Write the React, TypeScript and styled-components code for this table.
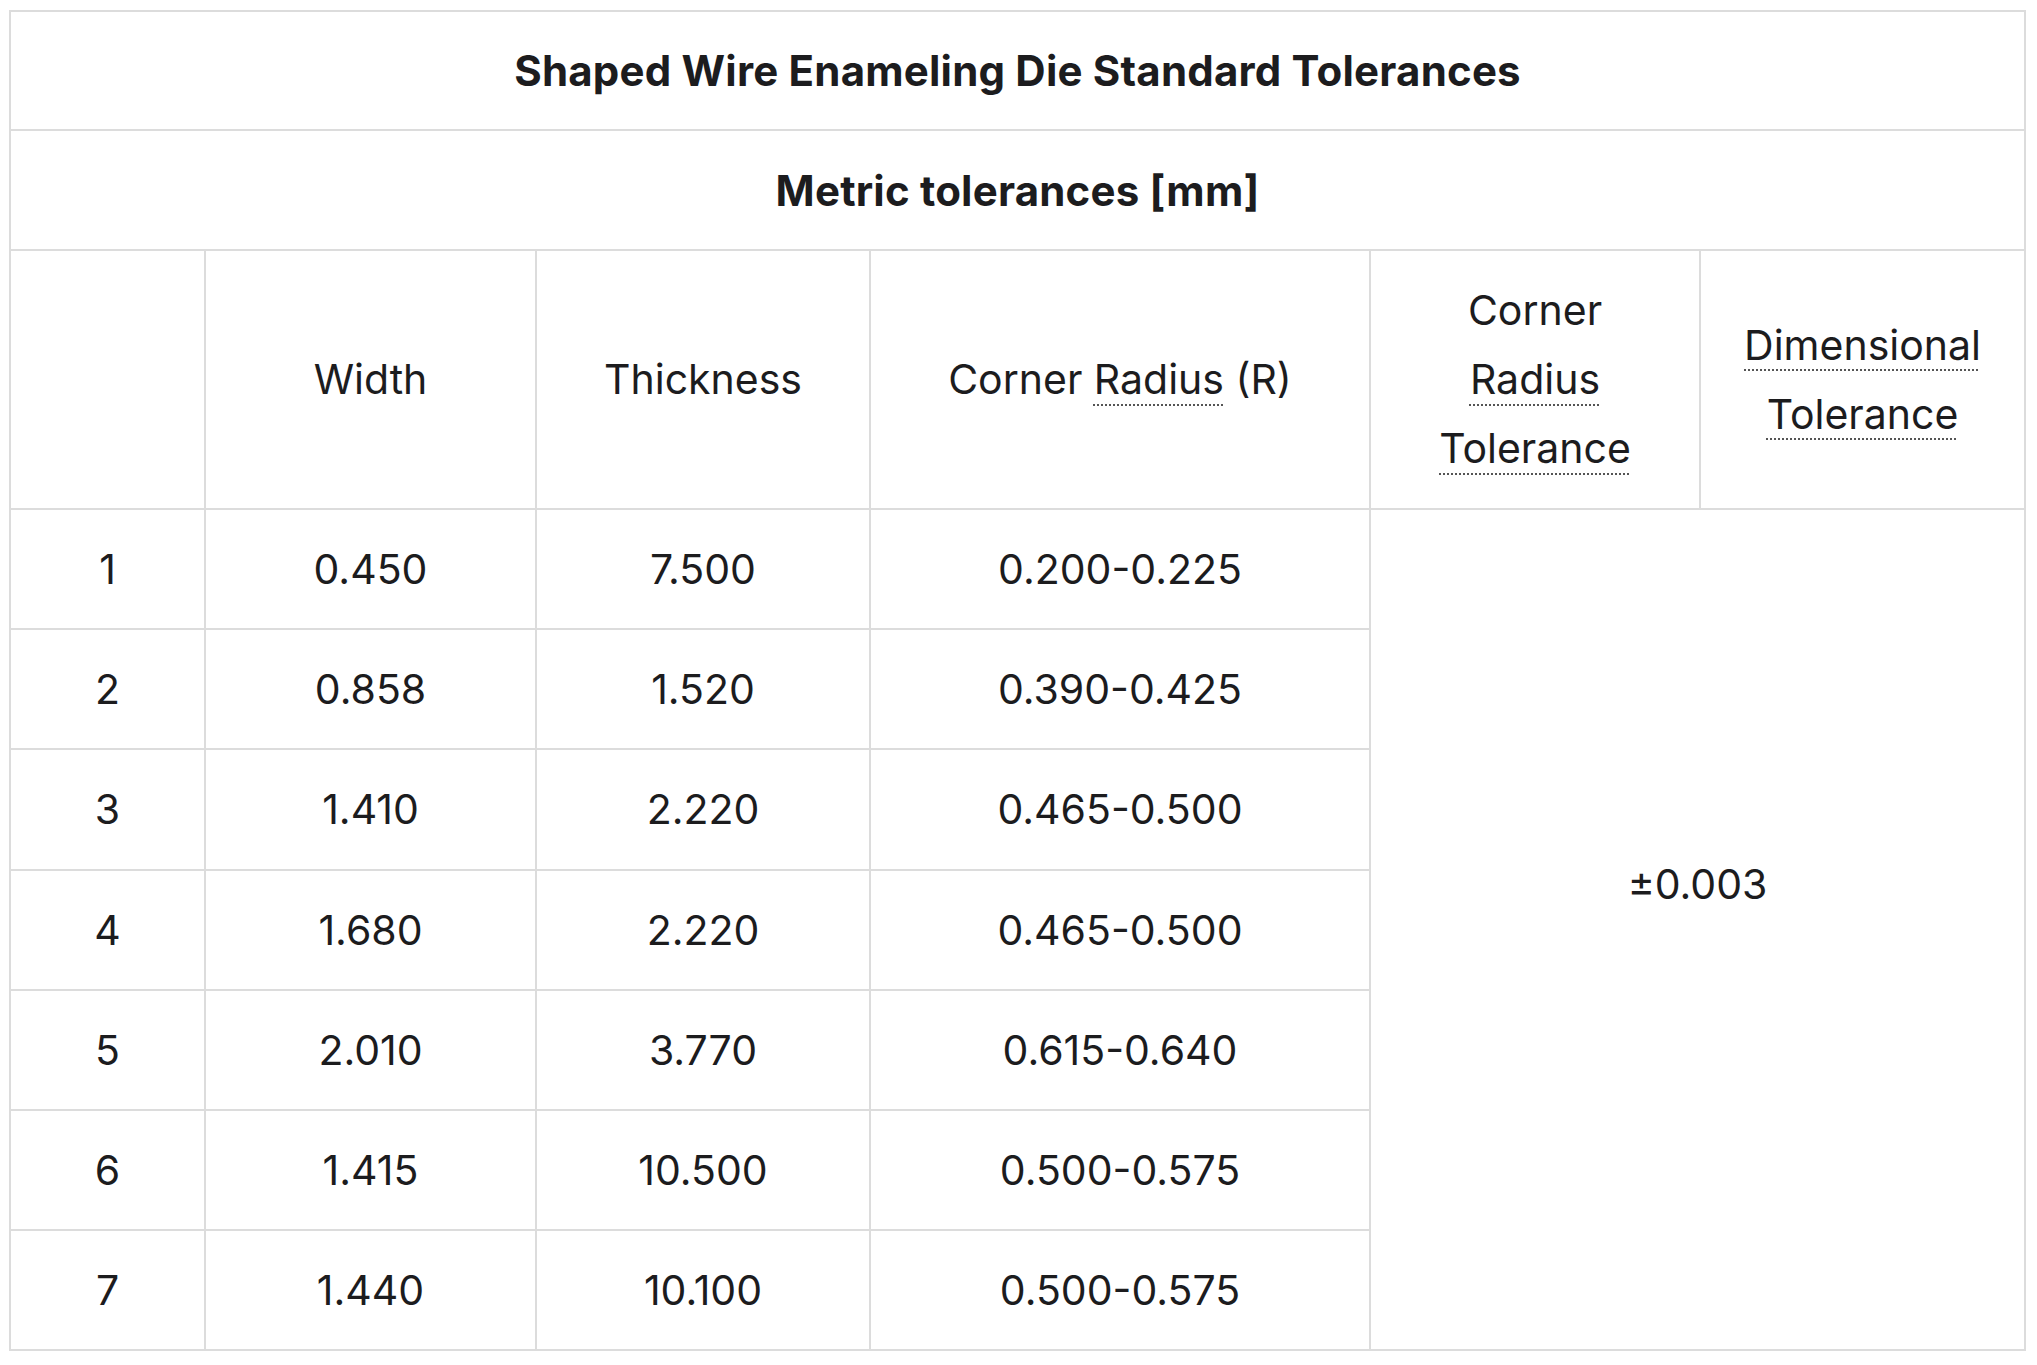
import React from "react";
import styled, { createGlobalStyle } from "styled-components";

type DieRow = {
  no: number;
  width: string;
  thickness: string;
  radius: string;
};

const rows: DieRow[] = [
  { no: 1, width: "0.450", thickness: "7.500", radius: "0.200-0.225" },
  { no: 2, width: "0.858", thickness: "1.520", radius: "0.390-0.425" },
  { no: 3, width: "1.410", thickness: "2.220", radius: "0.465-0.500" },
  { no: 4, width: "1.680", thickness: "2.220", radius: "0.465-0.500" },
  { no: 5, width: "2.010", thickness: "3.770", radius: "0.615-0.640" },
  { no: 6, width: "1.415", thickness: "10.500", radius: "0.500-0.575" },
  { no: 7, width: "1.440", thickness: "10.100", radius: "0.500-0.575" },
];

const colWidths = [195, 331, 334, 500, 330, 325];

const GlobalStyle = createGlobalStyle`
  html, body {
    margin: 0;
    padding: 0;
    background: #ffffff;
  }

  body {
    font-family: Inter, "Noto Sans", "Liberation Sans", sans-serif;
    color: #1c1c1e;
  }
`;

const Page = styled.div`
  padding: 10px 13px 13px 9px;
`;

const Table = styled.table`
  width: 2015px;
  table-layout: fixed;
  border-collapse: collapse;
  border: 2px solid #dcdcdc;
`;

const TitleCell = styled.th<{ $height: number }>`
  height: ${(p) => p.$height}px;
  padding: 0;
  border: 2px solid #dcdcdc;
  text-align: center;
  vertical-align: middle;
  font-size: 42px;
  font-weight: 700;
  letter-spacing: 0.2px;
  color: #1c1c1e;
`;

const HeadCell = styled.td`
  height: 257px;
  padding: 0 12px;
  border: 2px solid #dcdcdc;
  text-align: center;
  vertical-align: middle;
  font-size: 41px;
  line-height: 69px;
`;

const Cell = styled.td`
  height: 118.2px;
  padding: 0;
  border: 2px solid #dcdcdc;
  text-align: center;
  vertical-align: middle;
  font-size: 41px;
`;

const MergedCell = styled(Cell)`
  padding-bottom: 92px;
`;

const Line = styled.span`
  display: block;
`;

const Abbr = styled.abbr`
  text-decoration: underline dotted;
  text-decoration-color: #555;
  text-decoration-thickness: 2px;
  text-underline-offset: 10px;
`;

export default function App(): JSX.Element {
  return (
    <>
      <GlobalStyle />
      <Page>
        <Table>
          <colgroup>
            {colWidths.map((w, i) => (
              <col key={i} style={{ width: w }} />
            ))}
          </colgroup>
          <thead>
            <tr>
              <TitleCell colSpan={6} $height={117}>
                Shaped Wire Enameling Die Standard Tolerances
              </TitleCell>
            </tr>
            <tr>
              <TitleCell colSpan={6} $height={118}>
                Metric tolerances [mm]
              </TitleCell>
            </tr>
            <tr>
              <HeadCell />
              <HeadCell>Width</HeadCell>
              <HeadCell>Thickness</HeadCell>
              <HeadCell>
                Corner <Abbr title="Radius">Radius</Abbr> (R)
              </HeadCell>
              <HeadCell>
                <Line>Corner</Line>
                <Line>
                  <Abbr title="Radius">Radius</Abbr>
                </Line>
                <Line>
                  <Abbr title="Tolerance">Tolerance</Abbr>
                </Line>
              </HeadCell>
              <HeadCell>
                <Line>
                  <Abbr title="Dimensional">Dimensional</Abbr>
                </Line>
                <Line>
                  <Abbr title="Tolerance">Tolerance</Abbr>
                </Line>
              </HeadCell>
            </tr>
          </thead>
          <tbody>
            {rows.map((r, i) => (
              <tr key={r.no}>
                <Cell>{r.no}</Cell>
                <Cell>{r.width}</Cell>
                <Cell>{r.thickness}</Cell>
                <Cell>{r.radius}</Cell>
                {i === 0 && (
                  <MergedCell colSpan={2} rowSpan={rows.length}>
                    ±0.003
                  </MergedCell>
                )}
              </tr>
            ))}
          </tbody>
        </Table>
      </Page>
    </>
  );
}
